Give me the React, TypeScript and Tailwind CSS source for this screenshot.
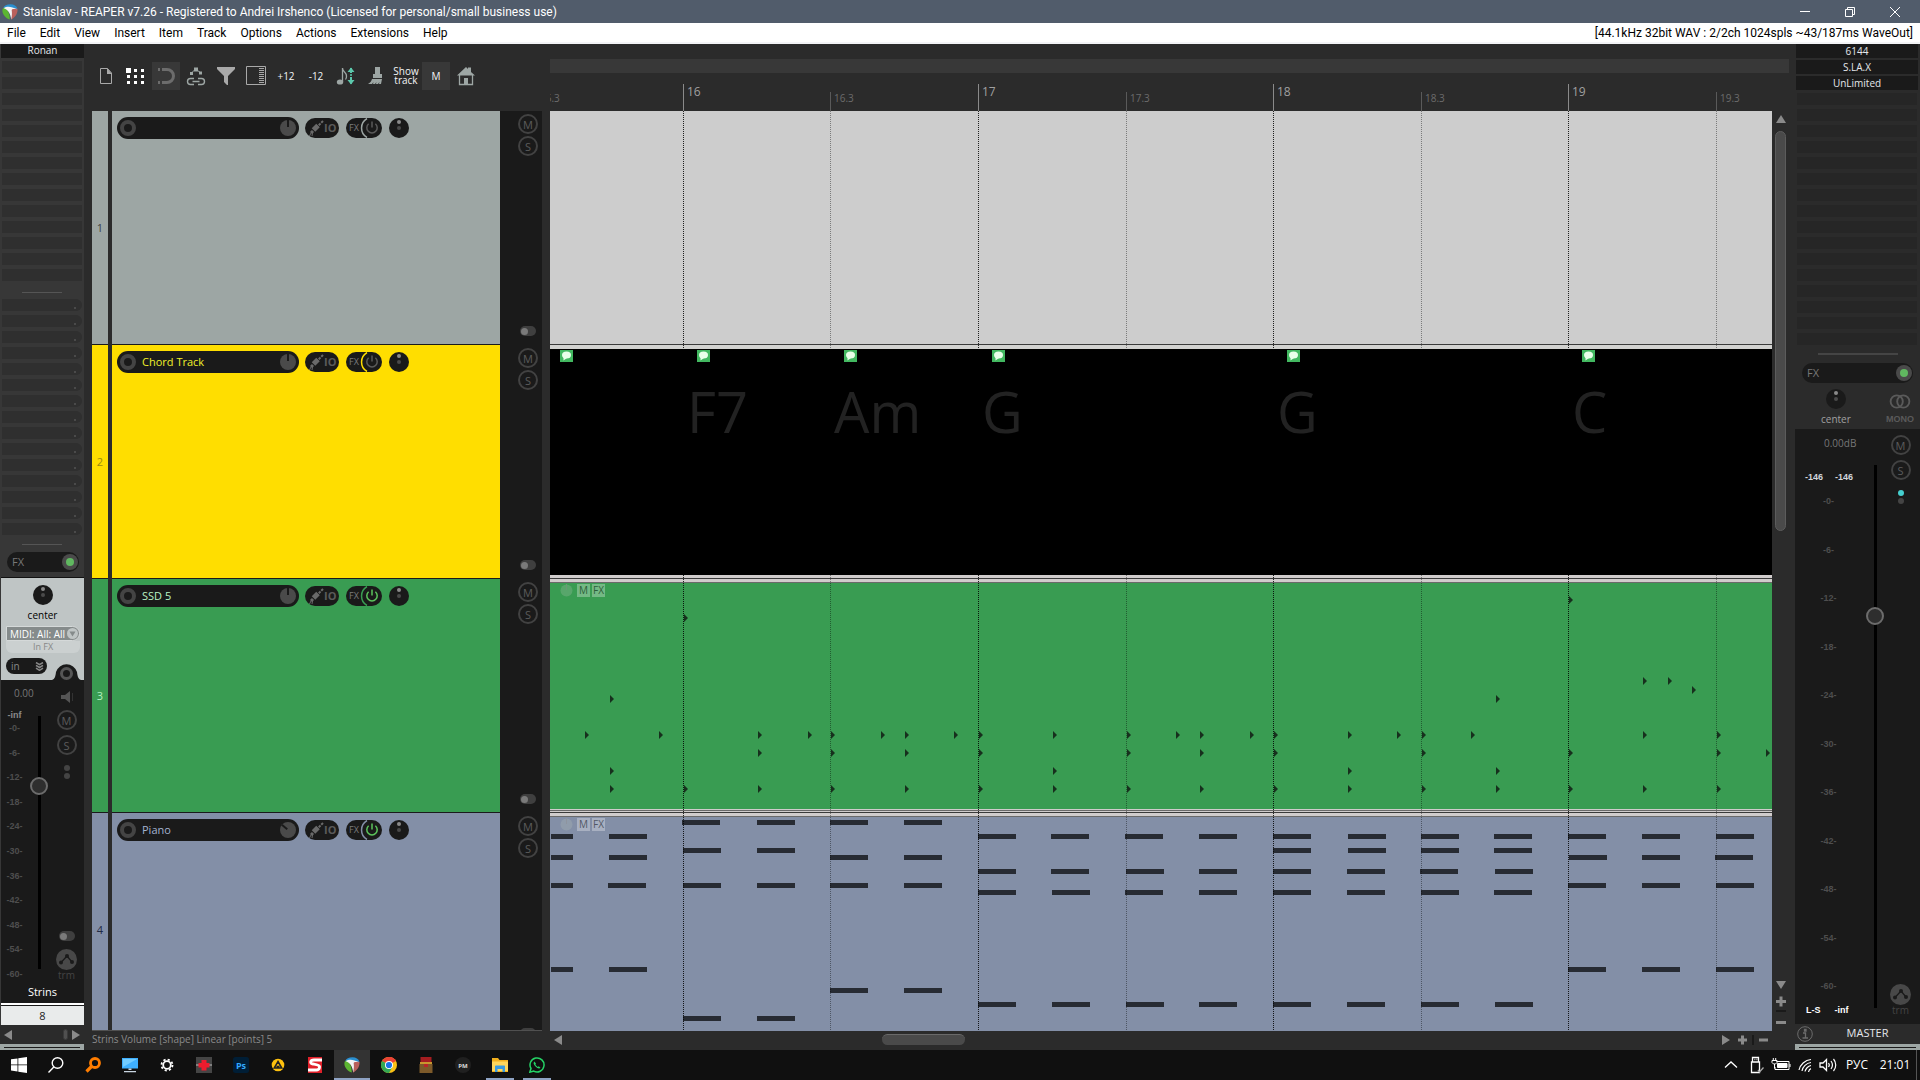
import { useState } from 'react';
import type { ReactNode } from 'react';

interface Track {
  id: number;
  name: string;
  body: string;
  number: string;
  text: string;
  ring: string;
  powered: boolean;
  knob: number;
}

const TRACKS: Track[] = [
  { id: 1, name: '', body: 'bg-[#9da6a4]', number: 'text-[#3a3f45]', text: 'text-gray-300', ring: '#9da6a4', powered: false, knob: 0 },
  { id: 2, name: 'Chord Track', body: 'bg-[#ffde00]', number: 'text-[#9c8a10]', text: 'text-[#f0f02a]', ring: '#ffde00', powered: false, knob: 0 },
  { id: 3, name: 'SSD 5', body: 'bg-[#399c52]', number: 'text-[#b5f0c0]', text: 'text-[#b9f2c4]', ring: '#399c52', powered: true, knob: 0 },
  { id: 4, name: 'Piano', body: 'bg-[#838fa7]', number: 'text-[#1f2a44]', text: 'text-[#a3b3d0]', ring: '#838fa7', powered: true, knob: -50 },
];

const MENU = ['File', 'Edit', 'View', 'Insert', 'Item', 'Track', 'Options', 'Actions', 'Extensions', 'Help'];
const SCALE = ['-0-', '-6-', '-12-', '-18-', '-24-', '-30-', '-36-', '-42-', '-48-', '-54-', '-60-'];

// x positions are pixels from the left edge of the arrange view
const BARS = [
  { x: -14, label: '15.3', major: false },
  { x: 133, label: '16', major: true },
  { x: 280, label: '16.3', major: false },
  { x: 428, label: '17', major: true },
  { x: 576, label: '17.3', major: false },
  { x: 723, label: '18', major: true },
  { x: 871, label: '18.3', major: false },
  { x: 1018, label: '19', major: true },
  { x: 1166, label: '19.3', major: false },
];

const CHORDS = [
  { x: 10, name: '' },
  { x: 147, name: 'F7' },
  { x: 294, name: 'Am' },
  { x: 442, name: 'G' },
  { x: 737, name: 'G' },
  { x: 1032, name: 'C' },
];

// [y, ...x]
const DRUMS: number[][] = [
  [17, 1019],
  [35, 134],
  [98, 1093, 1118],
  [107, 1142],
  [116, 60, 946],
  [152, 35, 109, 208, 258, 281, 331, 355, 404, 429, 503, 577, 626, 650, 700, 724, 798, 847, 872, 921, 1093, 1167],
  [170, 208, 281, 355, 429, 577, 650, 724, 872, 1019, 1167, 1216],
  [188, 60, 503, 798, 946],
  [206, 60, 134, 208, 281, 355, 429, 503, 577, 650, 724, 798, 872, 946, 1019, 1093, 1167],
];

const PIANO: number[][] = [
  [3, 132, 207, 280, 354],
  [17, 1, 59, 428, 501, 575, 649, 723, 798, 871, 944, 1018, 1092, 1166],
  [31, 133, 207, 723, 798, 871, 944],
  [38, 1, 59, 280, 354, 1019, 1092, 1165],
  [52, 428, 501, 576, 649, 723, 797, 870, 945],
  [66, 1, 58, 133, 207, 280, 354, 1018, 1092, 1166],
  [73, 428, 502, 575, 649, 723, 797, 871, 944],
  [150, 1, 59, 1018, 1092, 1166],
  [171, 280, 354],
  [185, 428, 502, 576, 649, 723, 797, 871, 945],
  [199, 133, 207],
];

function ReaperLogo({ className }: { className: string }) {
  return (
    <svg className={className} viewBox="0 0 16 16">
      <path d="M1 4.500C2 1.500 5 .3 8.500.3c3.500 0 6 1.500 7 4.500L11 6 7 3.200z" fill="#2a8fd0" />
      <path d="M.8 4.500 3 3.500c3.500 2.700 4.700 7 4.800 12C3 14-.9 9 .8 4.500z" fill="#5cb531" />
      <path d="M8.500 4.500c3 .2 5 0 7 .3.500 4.200-2 8.700-6.500 10.800C9.800 11 9.800 7.500 8.500 4.500z" fill="#b9605c" />
      <path d="M1.800 4.200C5 2 9.500 2.500 15 5.300c-3-.7-5.500-.3-5.300 1 .3 2 .5 5-.5 9.200C8.700 10.500 6.800 6 1.800 4.200z" fill="#f4f4f4" />
    </svg>
  );
}

function RoundButton({ label }: { label: string }) {
  return (
    <button className="flex size-5 shrink-0 items-center justify-center rounded-full border-2 border-[#424242] text-[11px] leading-none text-[#5c5c5c]">
      {label}
    </button>
  );
}

function Toggle() {
  return (
    <button aria-label="Lock" className="flex h-[10px] w-4 shrink-0 items-center rounded-full bg-[#3f3f3f] px-px">
      <span className="size-[7px] rounded-full bg-[#7a7a7a]" />
    </button>
  );
}

function PanKnob() {
  return (
    <button aria-label="Pan" className="flex size-5 shrink-0 flex-col items-center gap-[2px] rounded-full bg-[#1a1a1a] pt-[2px]">
      <span className="size-1 rounded-full bg-[#8a8a8a]" />
      <span className="size-1 rounded-full bg-[#4a4a4a]" />
    </button>
  );
}

function EnvelopeButton() {
  return (
    <button aria-label="Envelope" className="flex flex-col items-center text-[10px] leading-[11px] text-[#444]">
      <svg className="size-[21px]" viewBox="0 0 21 21">
        <circle cx="10.500" cy="10.500" r="10.500" fill="#484848" />
        <path d="M5 13.500 11 7l5 6" fill="none" stroke="#1a1a1a" strokeWidth="1.300" />
        <circle cx="5" cy="13.500" r="2" fill="#1a1a1a" />
        <circle cx="11" cy="7" r="2" fill="#1a1a1a" />
        <circle cx="16" cy="13" r="2" fill="#1a1a1a" />
      </svg>
      trm
    </button>
  );
}

function Fader({ label, value }: { label: string; value: number }) {
  const [level, setLevel] = useState(value);
  return (
    <input
      type="range"
      aria-label={label}
      min={0}
      max={1000}
      value={level}
      onChange={(e) => setLevel(Number(e.target.value))}
      className="min-h-0 w-[18px] flex-1 appearance-none bg-[linear-gradient(#000,#000)] bg-[length:3px_100%] bg-center bg-no-repeat [direction:rtl] [writing-mode:vertical-lr] [&::-webkit-slider-thumb]:size-[18px] [&::-webkit-slider-thumb]:appearance-none [&::-webkit-slider-thumb]:rounded-full [&::-webkit-slider-thumb]:border-2 [&::-webkit-slider-thumb]:border-[#6c6c6c] [&::-webkit-slider-thumb]:bg-[#2e2e2e]"
    />
  );
}

function FxPill() {
  return (
    <button className="flex h-5 items-center justify-between rounded-full bg-[#1a1a1a] pr-px pl-[5px] text-[11px] text-[#777]">
      FX
      <span className="flex size-4 items-center justify-center rounded-full bg-[#4a4a4a]">
        <span className="size-2 rounded-full bg-[#60b860]" />
      </span>
    </button>
  );
}

function DockHandle() {
  return (
    <div className="flex h-[6px] shrink-0 items-center bg-[#9da6a4] px-1">
      <div className="h-px flex-1 bg-[#1a1a1a]" />
    </div>
  );
}

function ScaleColumn() {
  return (
    <ul className="flex flex-1 flex-col justify-between text-center font-['Liberation_Sans'] text-[9px] leading-3 font-bold text-[#4e4e4e]">
      {SCALE.map((s) => (
        <li key={s}>{s}</li>
      ))}
    </ul>
  );
}

function MixerStrip() {
  return (
    <aside className="flex w-[84px] shrink-0 flex-col bg-[#373737] text-[10px]">
      <div className="ml-px h-[14px] bg-[#1a1a1a] text-center leading-[13px] text-gray-200">Ronan</div>
      <div className="mt-[3px] flex flex-col gap-1 px-[2px]">
        {Array.from({ length: 14 }, (_, i) => (
          <div key={i} className="h-3 bg-[#2f2f2f]" />
        ))}
      </div>
      <div className="mx-auto mt-[11px] mb-[6px] h-px w-10 bg-[#555]" />
      <div className="flex flex-col gap-1 px-[2px]">
        {Array.from({ length: 15 }, (_, i) => (
          <div key={i} className="flex h-3 items-end justify-end rounded-r-md bg-[#2f2f2f] pr-[6px] pb-[2px]">
            <span className="size-[2px] bg-[#4a4a4a]" />
          </div>
        ))}
      </div>
      <div className="mx-auto mt-[9px] mb-[7px] h-px w-10 bg-[#555]" />
      <div className="mr-[5px] mb-[5px] ml-[7px] flex flex-col">
        <FxPill />
      </div>

      <div className="relative ml-px flex h-[103px] shrink-0 flex-col border-t border-[#111] bg-[#bfc5c5] pt-[7px]">
        <div className="flex flex-col items-center">
          <PanKnob />
          <span className="leading-5 text-black">center</span>
        </div>
        <div className="relative mt-px mr-1 ml-[5px] flex h-[15px] items-center rounded-r-full border border-[#d5d9d9] bg-[#858b8b]">
          <select aria-label="Record input" className="h-full w-full appearance-none pl-[3px] text-[10px] leading-none text-white">
            <option>MIDI: All: All</option>
          </select>
          <svg className="pointer-events-none absolute right-0 size-[13px]" viewBox="0 0 13 13">
            <circle cx="6.500" cy="6.500" r="5.500" fill="#bfc5c5" />
            <path d="M3.500 4.500h6l-3 5z" fill="#858b8b" />
          </svg>
        </div>
        <button className="mr-1 ml-[5px] h-3 rounded-b-md bg-[#cbd0d0] text-[9px] leading-3 text-[#888]">In FX</button>
        <button className="mt-[5px] ml-[5px] flex h-4 w-[41px] items-center justify-between rounded-full bg-[#1a1a1a] pr-[3px] pl-[5px] text-[10px] text-[#888]">
          in
          <svg className="size-[9px]" viewBox="0 0 9 9" fill="none" stroke="#888" strokeWidth="1.500">
            <path d="M1 .5l3.500 2.200L8 .5M1 3.300l3.500 2.200L8 3.300M1 6.100l3.500 2.200L8 6.100" />
          </svg>
        </button>
        <svg className="absolute right-0 -bottom-2 h-[26px] w-[33px]" viewBox="0 0 33 26">
          <path d="M1 18C4 17 4.500 14 5 10a11 11 0 0 1 21 0c.5 4 1 7 4 8v1H1z" fill="#1a1a1a" />
          <circle cx="15.500" cy="11.500" r="5" fill="none" stroke="#565656" strokeWidth="3" />
        </svg>
      </div>

      <div className="ml-px flex min-h-0 flex-1 flex-col bg-[#1a1a1a]">
        <div className="flex min-h-0 flex-1">
          <div className="flex w-12 flex-col">
            <span className="h-7 pl-[13px] text-[10px] leading-[26px] text-[#777]">0.00</span>
            <div className="flex min-h-0 flex-1">
              <div className="flex w-[27px] flex-col pb-px">
                <span className="text-center font-['Liberation_Sans'] text-[9px] leading-[14px] font-bold text-[#8a8a8a]">-inf</span>
                <ScaleColumn />
              </div>
              <div className="ml-[2px] flex flex-col pt-2 pb-3">
                <Fader label="Strins volume" value={742} />
              </div>
            </div>
          </div>
          <div className="flex flex-1 flex-col items-center pt-[11px]">
            <svg className="h-3 w-[14px]" viewBox="0 0 14 12">
              <path d="M1 4h4l5-4v12L5 8H1z" fill="#555" />
              <path d="M12.500 2v8" stroke="#333" />
            </svg>
            <div className="mt-[7px] flex flex-col gap-[5px]">
              <RoundButton label="M" />
              <RoundButton label="S" />
            </div>
            <div className="mt-[10px] flex flex-col gap-[2px]">
              <span className="size-[6px] rounded-full bg-[#444]" />
              <span className="size-[6px] rounded-full bg-[#444]" />
            </div>
            <div className="mt-auto flex flex-col items-center gap-2">
              <Toggle />
              <EnvelopeButton />
            </div>
          </div>
        </div>
        <div className="h-[22px] text-center text-[11px] leading-[22px] text-white">Strins</div>
        <div className="h-[2px] bg-white" />
        <div className="mt-px h-[19px] bg-[#e9ebeb] text-center text-[11px] leading-[20px] text-[#222]">8</div>
      </div>
      <div className="flex h-[19px] shrink-0 items-center bg-[#2b2b2b] px-1">
        <svg className="h-[10px] w-2" viewBox="0 0 8 10"><path d="M8 0v10L0 5z" fill="#8a8a8a" /></svg>
        <span className="ml-auto h-[11px] w-[5px] rounded-sm border border-[#3a3a3a] bg-[#505050]" />
        <svg className="ml-1 h-[10px] w-2" viewBox="0 0 8 10"><path d="M0 0v10l8-5z" fill="#8a8a8a" /></svg>
      </div>
      <DockHandle />
    </aside>
  );
}

function ToolButton({ label, active, children }: { label: string; active?: boolean; children: ReactNode }) {
  return (
    <button
      aria-label={label}
      className={`flex size-7 items-center justify-center text-[10px] leading-[9px] text-gray-100 ${active ? 'bg-[#383838]' : ''}`}
    >
      {children}
    </button>
  );
}

function Toolbar() {
  return (
    <div className="flex h-[67px] shrink-0 gap-[2px] pt-[18px]">
      <ToolButton label="New project">
        <svg className="size-5" viewBox="0 0 20 20">
          <path d="M4.500 2.500h7l4 4.500v10.500h-11z" fill="none" stroke="#a9a9a9" />
          <path d="M11 2v6h5z" fill="#a9a9a9" />
        </svg>
      </ToolButton>
      <ToolButton label="Grid">
        <svg className="size-5" viewBox="0 0 20 20" fill="#fff">
          <path d="M0 2h5v5H0zM8 3h3v3H8zM15 3h3v3h-3zM1 9h3v3H1zM8 9h3v3H8zM15 9h3v3h-3zM1 15h3v3H1zM8 15h3v3H8zM15 15h3v3h-3z" />
        </svg>
      </ToolButton>
      <ToolButton label="Snap" active>
        <svg className="size-5" viewBox="0 0 20 20" fill="none" stroke="#6c6c6c">
          <path d="M6 3.500h5a6.500 6.500 0 0 1 0 13H6" strokeWidth="3" />
          <path d="M2 3.500h2M2 16.500h2" strokeWidth="3" />
        </svg>
      </ToolButton>
      <ToolButton label="Envelope link">
        <svg className="size-5" viewBox="0 0 20 20">
          <path d="M5 7.500l4.500-4.500L15 7" fill="none" stroke="#9da6a4" />
          <path d="M4 6h3v3H4zM8 1.500h4v4H8zM13 5.500h3v3h-3z" fill="#9da6a4" />
          <path d="M8 18.500H4.500a3 3 0 0 1 0-6H8M12 12.500h3.500a3 3 0 0 1 0 6H12M6.500 15.500h7" fill="none" stroke="#9da6a4" strokeWidth="1.400" />
        </svg>
      </ToolButton>
      <ToolButton label="Filter">
        <svg className="size-5" viewBox="0 0 20 20">
          <path d="M1 1h18v2l-7 7v9H11l-3-3v-6L1 3z" fill="#a9a9a9" />
        </svg>
      </ToolButton>
      <ToolButton label="Panel">
        <svg className="size-5" viewBox="0 0 20 20" stroke="#a9a9a9" fill="none">
          <path d="M.5.500h19v18H.5z" />
          <path d="M13 2.500h5M13 4.500h5M13 6.500h5M13 8.500h5M13 10.500h5M13 12.500h5M13 14.500h5M13 16.500h5" />
        </svg>
      </ToolButton>
      <ToolButton label="Up an octave">+12</ToolButton>
      <ToolButton label="Down an octave">-12</ToolButton>
      <ToolButton label="Transpose">
        <svg className="size-5" viewBox="0 0 20 20">
          <ellipse cx="4" cy="16" rx="3.200" ry="2.600" fill="#9da6a4" />
          <path d="M6.500 16V2c0 4 4 4 4 8 0 1.500-.5 3-1 3.500" fill="none" stroke="#9da6a4" strokeWidth="1.300" />
          <path d="M15 2v16" stroke="#5cc8ac" strokeWidth="2" strokeDasharray="5 1.200 1.600 1.200" />
          <path d="M11.500 6 15 1.500 18.500 6zM11.500 14l3.500 4.500 3.500-4.500z" fill="#5cc8ac" />
        </svg>
      </ToolButton>
      <ToolButton label="Clean">
        <svg className="size-5" viewBox="0 0 20 20" fill="#9da6a4">
          <path d="M9 1h5v7h2v4H7V8h2z" />
          <path d="M7 13h9l-1 5h-2l.5-2-1.500 2h-2l.5-2-1.500 2H7l.5-2L6 18H2c2-1 3.500-3 4-5z" />
        </svg>
      </ToolButton>
      <ToolButton label="Show track">Show track</ToolButton>
      <ToolButton label="Mute" active>M</ToolButton>
      <ToolButton label="Home">
        <svg className="size-5" viewBox="0 0 20 20">
          <path d="M1 9.500 10 1l2 2V1.500h3V6l4 3.500z" fill="#9da6a4" />
          <path d="M3.500 9v9.500h13V9" fill="none" stroke="#9da6a4" strokeWidth="1.300" />
          <path d="M8 12h4v6H8z" fill="#9da6a4" />
        </svg>
      </ToolButton>
    </div>
  );
}

function TrackHeader({ track }: { track: Track }) {
  return (
    <section className="flex h-[234px] shrink-0">
      <div className={`flex w-4 items-center justify-center border-b border-[#1a1a1a] pt-px text-[11px] ${track.body} ${track.number}`}>
        {track.id}
      </div>
      <div className={`ml-1 flex min-w-0 flex-1 items-start border-b border-[#1a1a1a] pt-[6px] pl-[5px] ${track.body}`}>
        <div className="flex h-[22px] w-[182px] items-center rounded-full bg-[#1a1a1a] px-[3px]">
          <button aria-label="Record arm" className="size-4 shrink-0 rounded-full border-4 border-[#444] bg-[#1a1a1a]" />
          <input
            aria-label={`Track ${track.id} name`}
            defaultValue={track.name}
            className={`ml-[6px] w-0 min-w-0 flex-1 text-[11px] outline-none ${track.text}`}
          />
          <svg className="size-4 shrink-0" viewBox="0 0 16 16">
            <circle cx="8" cy="8" r="8" fill="#4a4a4a" />
            <path d="M8 0v7" stroke="#1a1a1a" strokeWidth="2" transform={`rotate(${track.knob} 8 8)`} />
          </svg>
        </div>
        <button className="mt-px ml-[6px] flex h-5 w-[34px] items-center rounded-full bg-[#1a1a1a] pl-[3px] text-[11px] font-bold text-[#5a5a5a]">
          <svg className="h-4 w-4" viewBox="0 0 16 16" stroke="#6a6a6a">
            <path d="M15 1 9 7" strokeWidth="2" strokeDasharray="2.500 1" />
            <path d="M10 5.500 5.500 10" strokeWidth="5" />
            <path d="M5 11l-2 2" strokeWidth="3" />
            <path d="M1.500 16l1.500-3M4 16l.5-3" strokeWidth="1" />
          </svg>
          IO
        </button>
        <div className="mt-px ml-[7px] flex h-5 w-9 items-center rounded-full bg-[#1a1a1a] pl-[2px]">
          <button className="w-3 text-[9px] text-[#7a7a7a]">FX</button>
          <button aria-label="FX power">
            <svg className="h-5 w-[22px]" viewBox="0 0 22 20" fill="none">
              <path d="M7 .5a11 11 0 0 0 0 19" stroke={track.ring} strokeWidth="1.500" />
              <g stroke={track.powered ? '#5cc45c' : '#5a5a5a'} strokeWidth="1.500">
                <path d="M8.600 5.800a5.200 5.200 0 1 0 6.800 0M12 3.500v6" />
              </g>
            </svg>
          </button>
        </div>
        <div className="mt-px ml-[7px]">
          <PanKnob />
        </div>
      </div>
      <div className="flex w-[42px] flex-col items-center gap-[2px] bg-[#1a1a1a] pt-[3px] pb-[9px] pl-[14px]">
        <RoundButton label="M" />
        <RoundButton label="S" />
        <div className="mt-auto">
          <Toggle />
        </div>
      </div>
    </section>
  );
}

function TrackPanel() {
  return (
    <div className="ml-2 flex w-[450px] shrink-0 flex-col">
      <Toolbar />
      <div className="min-h-0 flex-1 overflow-hidden">
        {TRACKS.map((t) => (
          <TrackHeader key={t.id} track={t} />
        ))}
      </div>
      <div className="h-5 shrink-0 border-t border-[#505050] text-[10px] leading-[17px] text-[#8a8a8a]">
        Strins Volume [shape] Linear [points] 5
      </div>
    </div>
  );
}

function ItemBadges() {
  return (
    <div className="flex gap-[2px] pt-px pl-[10px] text-[10px] leading-3 opacity-50">
      <svg className="size-[13px]" viewBox="0 0 13 13">
        <circle cx="6.500" cy="6.500" r="6" fill="#b8c4b8" fillOpacity=".5" />
        <path d="M6.500 0v6" stroke="#999" />
      </svg>
      <span className="ml-[2px] h-[13px] w-[13px] bg-white/60 text-center text-[#222]">M</span>
      <span className="h-[13px] w-[13px] bg-white/60 text-center text-[#222]">FX</span>
    </div>
  );
}

function Arrange() {
  return (
    <div className="relative min-h-0 flex-1 overflow-hidden">
      <div className="h-[233px] bg-[#cdcdcd]" />
      <div className="h-px bg-[#3a3a3a]" />
      <div className="h-1 bg-[#d2d2d0]" />
      <div className="relative h-[226px] bg-black">
        {CHORDS.map((c) => (
          <div key={c.x} className="absolute top-px" style={{ left: c.x }}>
            <svg className="h-3 w-[13px]" viewBox="0 0 13 12">
              <path d="M0 0h13v12H0z" fill="#42b860" />
              <ellipse cx="6.500" cy="5" rx="4.500" ry="3.500" fill="#e8ffe8" />
              <path d="M3.500 6.500v4L7 8z" fill="#e8ffe8" />
            </svg>
            <span className="absolute top-[23px] -left-[10px] text-[56px] leading-[76px] text-[#222]">{c.name}</span>
          </div>
        ))}
      </div>
      <div className="h-1 border-b border-[#3a3a3a] bg-[#d0cccc]" />
      <div className="h-1 border-b border-[#6a6a6a] bg-[#d0cccc]" />
      <div className="relative h-[226px] bg-[#399c52]">
        <svg className="absolute inset-0 h-full w-full" fill="#17301d">
          {DRUMS.map(([y, ...xs]) =>
            xs.map((x) => <path key={`${x}-${y}`} d={`M${x} ${y - 4}l4 4-4 4z`} />),
          )}
        </svg>
        <ItemBadges />
      </div>
      <div className="h-[2px] border-b border-[#6a6a6a] bg-[#d0cccc]" />
      <div className="h-[2px] border-b border-[#3a3a3a] bg-[#d0cccc]" />
      <div className="h-1 border-b border-[#6a6a6a] bg-[#d0cccc]" />
      <div className="relative h-full bg-[#838fa7]">
        <svg className="absolute inset-0 h-full w-full" fill="#272b33">
          {PIANO.map(([y, ...xs]) =>
            xs.map((x) => <rect key={`${x}-${y}`} x={x} y={y} width={x === 1 ? 22 : 38} height="5" />),
          )}
        </svg>
        <ItemBadges />
      </div>
      <svg className="absolute inset-0 h-full w-full" shapeRendering="crispEdges">
        {BARS.map((b) => (
          <line key={b.label} x1={b.x + 0.5} x2={b.x + 0.5} y1="0" y2="100%" stroke="#000" strokeOpacity={b.major ? 0.85 : 0.4} strokeDasharray="1 1" />
        ))}
      </svg>
    </div>
  );
}

function Ruler() {
  return (
    <div className="relative h-[38px] shrink-0 overflow-hidden">
      {BARS.map((b) => (
        <span
          key={b.label}
          style={{ left: b.x }}
          className={
            b.major
              ? 'absolute bottom-0 h-[27px] border-l border-[#8a8a8a] pl-[3px] text-xs leading-4 text-[#a0a0a0]'
              : 'absolute bottom-0 h-[19px] border-l border-[#5a5a5a] pl-[3px] text-[10px] leading-[13px] text-[#6c6c6c]'
          }
        >
          {b.label}
        </span>
      ))}
    </div>
  );
}

function Timeline() {
  return (
    <div className="ml-2 flex min-w-0 flex-1 flex-col">
      <div className="mt-[15px] mr-[6px] h-[14px] shrink-0 bg-[#383838]" />
      <div className="flex min-h-0 flex-1">
        <div className="flex min-w-0 flex-1 flex-col">
          <Ruler />
          <Arrange />
          <div className="flex h-[19px] shrink-0 items-center pr-1 pb-[2px] pl-1">
            <svg className="h-[10px] w-2" viewBox="0 0 8 10"><path d="M8 0v10L0 5z" fill="#8a8a8a" /></svg>
            <div className="flex flex-1">
              <div className="ml-[27.6%] h-[11px] w-[83px] rounded-full border-t border-[#6a6a6a] bg-[#4a4a4a]" />
            </div>
            <svg className="h-[10px] w-[46px]" viewBox="0 0 46 10" fill="#8a8a8a">
              <path d="M0 0v10l8-5zM16 3.500h3v-3h3v3h3v3h-3v3h-3v-3h-3zM37 3.500h9v3h-9z" />
              <path d="M30 0h2v10h-2z" fill="#1a1a1a" />
            </svg>
          </div>
        </div>
        <div className="flex w-[23px] flex-col items-center pt-[42px] pr-[6px] pb-[23px]">
          <svg className="h-2 w-[10px]" viewBox="0 0 10 8"><path d="M5 0l5 8H0z" fill="#8a8a8a" /></svg>
          <div className="mt-2 flex w-full flex-1 flex-col items-center">
            <div className="h-[47%] w-[11px] rounded-full border border-[#5c5c5c] bg-[#4a4a4a]" />
          </div>
          <svg className="h-[46px] w-[10px]" viewBox="0 0 10 46" fill="#8a8a8a">
            <path d="M0 0h10L5 8zM0 19h3.500v-3.500h3V19H10v3H6.500v3.500h-3V22H0zM0 40h10v3H0z" />
            <path d="M0 29h10v2H0z" fill="#1a1a1a" />
          </svg>
        </div>
      </div>
    </div>
  );
}

function MasterStrip() {
  return (
    <aside className="flex w-[125px] shrink-0 flex-col text-[10px]">
      <div className="mr-[2px] ml-px flex flex-col gap-[2px] text-center leading-[13px] text-gray-200">
        {['6144', 'S.LA.X', 'UnLimited'].map((fx) => (
          <button key={fx} className="h-[14px] bg-[#1a1a1a]">{fx}</button>
        ))}
      </div>
      <div className="mt-[3px] mr-[3px] ml-[2px] flex flex-col gap-1">
        {Array.from({ length: 16 }, (_, i) => (
          <div key={i} className="h-3 bg-[#262626]" />
        ))}
      </div>
      <div className="mx-auto mt-2 mb-2 h-[2px] w-20 bg-[#454545]" />
      <div className="mr-[7px] ml-[7px] flex flex-col">
        <FxPill />
      </div>
      <div className="mt-[6px] flex h-10 justify-between pr-[6px] pl-[26px] text-[10px]">
        <div className="flex flex-col items-center leading-5 text-[#a0a0a0]">
          <PanKnob />
          center
        </div>
        <button className="flex flex-col items-center pt-[5px] font-['Liberation_Sans'] text-[9px] leading-5 font-bold text-[#5a5a5a]">
          <svg className="h-4 w-6" viewBox="0 0 24 16" fill="none" stroke="#5a5a5a" strokeWidth="2">
            <circle cx="8.500" cy="8" r="6.500" />
            <circle cx="15.500" cy="8" r="6.500" />
          </svg>
          MONO
        </button>
      </div>
      <div className="flex min-h-0 flex-1 bg-[#1a1a1a]">
        <div className="flex w-[71px] flex-col">
          <span className="pl-[29px] leading-7 whitespace-nowrap text-[#777]">0.00dB</span>
          <div className="mt-3 flex gap-3 pl-[10px] font-['Liberation_Sans'] text-[9px] leading-4 font-bold text-gray-300">
            <span>-146</span>
            <span>-146</span>
          </div>
          <div className="mt-[10px] flex min-h-0 flex-1 flex-col pr-1">
            <ScaleColumn />
          </div>
          <div className="mt-2 mb-1 flex gap-[14px] pl-[11px] font-['Liberation_Sans'] text-[9px] leading-5 font-bold text-white">
            <span>L-S</span>
            <span>-inf</span>
          </div>
        </div>
        <div className="flex flex-col pt-9 pb-4">
          <Fader label="Master volume" value={730} />
        </div>
        <div className="flex flex-1 flex-col items-center pt-[6px] pr-[3px]">
          <div className="flex flex-col gap-[5px]">
            <RoundButton label="M" />
            <RoundButton label="S" />
          </div>
          <div className="mt-[10px] flex flex-col gap-[2px]">
            <span className="size-[6px] rounded-full bg-[#45cfcf]" />
            <span className="size-[6px] rounded-full bg-[#444]" />
          </div>
          <div className="mt-auto pb-2">
            <EnvelopeButton />
          </div>
        </div>
      </div>
      <div className="flex h-5 shrink-0 items-center px-[2px] pb-px text-[11px] text-gray-200">
        <svg className="size-4" viewBox="0 0 16 16" fill="none" stroke="#6c6c6c">
          <circle cx="8" cy="8" r="7.300" />
          <path d="M6 7h2.500v5M5.500 12h5.500M7.500 3.500h1.500v1.500H7.500z" strokeWidth="1.300" />
        </svg>
        <span className="flex-1 pl-1 text-center">MASTER</span>
      </div>
      <DockHandle />
    </aside>
  );
}

const APPS: { label: string; icon: ReactNode; open?: boolean; active?: boolean }[] = [
  { label: 'Start', icon: <path d="M0 2.300 6.500 1.400v6.100H0zM7.300 1.300 16 0v7.500H7.300zM0 8.300h6.500v6.200L0 13.600zM7.300 8.300H16V16l-8.700-1.300z" fill="#fff" /> },
  {
    label: 'Search',
    icon: (
      <g fill="none" stroke="#fff" strokeWidth="1.400">
        <circle cx="9.500" cy="6" r="5.300" />
        <path d="M5.800 10 .5 15.500" />
      </g>
    ),
  },
  {
    label: 'Everything',
    icon: (
      <g fill="none" stroke="#ff7d00">
        <circle cx="10" cy="6" r="4.500" strokeWidth="2.800" />
        <path d="M6.500 9.500 1.500 14.500" strokeWidth="3.200" />
      </g>
    ),
  },
  {
    label: 'This PC',
    icon: (
      <>
        <path d="M0 1h16v10.500H0z" fill="#3fb0ff" />
        <path d="M1 2h14L1 10z" fill="#72ccff" />
        <path d="M6.500 11.500h3V13h-3zM2 14h12v1.200H2z" fill="#c9d6e2" />
      </>
    ),
  },
  {
    label: 'Settings',
    icon: (
      <g fill="none" stroke="#fff">
        <circle cx="8" cy="8" r="3.800" strokeWidth="1.800" />
        <circle cx="8" cy="8" r="5.500" strokeWidth="1.800" strokeDasharray="2.160 2.160" />
      </g>
    ),
  },
  {
    label: 'Audio tool',
    icon: (
      <>
        <path d="M0 0h16v16H0z" fill="#454545" />
        <path d="M0 8h16" stroke="#bbb" />
        <path d="M5.500 3h5v3h3v4.500h-3v3h-5v-3h-3V6h3z" fill="#ee1c2e" />
      </>
    ),
  },
  {
    label: 'Photoshop',
    icon: (
      <>
        <rect width="16" height="16" rx="2.500" fill="#001e36" />
        <text x="8" y="11.500" textAnchor="middle" fontSize="9" fontWeight="700" fill="#31a8ff">Ps</text>
      </>
    ),
  },
  {
    label: 'Player',
    icon: (
      <>
        <circle cx="8" cy="8" r="6.300" fill="#ffc20e" />
        <path d="M8 4.500 11.800 11H4.200zM6.500 9.500h3" fill="none" stroke="#222" strokeWidth="1.500" />
      </>
    ),
  },
  {
    label: 'Score editor',
    icon: (
      <>
        <path d="M1 0h14v16H1z" fill="#e0202a" />
        <path d="M15 3H7C3 3 2.500 6.500 6 7l4.500 1c3.500 1 2 5-1 5H1" fill="none" stroke="#fff" strokeWidth="2.800" />
      </>
    ),
  },
  { label: 'REAPER', icon: null, open: true, active: true },
  {
    label: 'Chrome',
    icon: (
      <>
        <circle cx="8" cy="8" r="8" fill="#fbc116" />
        <path d="M8 8 1.070 4A8 8 0 0 1 14.930 4z" fill="#ea4335" />
        <path d="M8 0a8 8 0 0 1 6.930 4H8z" fill="#ea4335" />
        <path d="M1.070 4A8 8 0 0 0 8 16l3.500-6L8 8z" fill="#34a853" />
        <circle cx="8" cy="8" r="4" fill="#fff" />
        <circle cx="8" cy="8" r="3.100" fill="#1a73e8" />
      </>
    ),
  },
  {
    label: 'Library',
    icon: (
      <>
        <path d="M2.500 0h11v5h-11z" fill="#a51d20" />
        <path d="M2 5h12v2H2z" fill="#c9962e" />
        <path d="M1.500 7h13v9h-13z" fill="#7d5a2a" />
        <path d="M6 7h4v3H6z" fill="#b8262a" />
      </>
    ),
  },
  {
    label: 'Plugin manager',
    icon: (
      <>
        <circle cx="8" cy="8" r="8" fill="#202020" />
        <text x="8" y="10.500" textAnchor="middle" fontSize="6" fontWeight="700" fill="#ddd">PM</text>
      </>
    ),
  },
  {
    label: 'Explorer',
    open: true,
    icon: (
      <>
        <path d="M0 1h6l1.500 2H16v12H0z" fill="#f2b01e" />
        <path d="M0 4.500h16V14H0z" fill="#ffd65c" />
        <path d="M3 15V9.500c0-.8.500-1 1-1h8c.6 0 1 .4 1 1V15h-2.500v-3h-5v3z" fill="#3a9be0" />
      </>
    ),
  },
  {
    label: 'WhatsApp',
    open: true,
    icon: (
      <>
        <path d="M.8 15.200 2 11.500a7 7 0 1 1 2.700 2.600z" fill="none" stroke="#25d366" strokeWidth="1.500" />
        <path d="M5.500 4.500c-1.500 1-1 3 1 5s4 2.500 5 1.200l-1.800-1.400-1 .6C7.500 9.300 7 8.700 6.400 7.600l.6-.9z" fill="#25d366" />
      </>
    ),
  },
];

function Taskbar() {
  return (
    <footer className="flex h-[30px] shrink-0 items-stretch bg-[#101010] text-xs text-white">
      <nav className="flex gap-px pl-px">
        {APPS.map((a) => (
          <button
            key={a.label}
            aria-label={a.label}
            className={`flex w-9 flex-col items-center pt-[7px] ${a.active ? 'bg-[#333]' : ''}`}
          >
            {a.icon ? <svg className="size-4" viewBox="0 0 16 16">{a.icon}</svg> : <ReaperLogo className="size-4" />}
            {a.open && <span className={`mt-auto h-[2px] bg-[#8fa3c4] ${a.active ? 'w-full' : 'w-7'}`} />}
          </button>
        ))}
      </nav>
      <div className="ml-auto flex items-center">
        <svg className="h-[18px] w-[120px]" viewBox="0 0 120 18" fill="none" stroke="#fff" strokeWidth="1.300">
          <path d="M6 11.500 12 6l6 5.500" />
          <path d="M33.500 6V1.500h6V6M32.500 6h8v10.500h-8zM35.500 3.500h.8M37.500 3.500h.8" />
          <path d="M39 14l1.500 2 4-4.500" stroke="#aaa" />
          <path d="M57.500 5.500h12.500v8H56V11" strokeWidth="1" />
          <path d="M58.500 7.500h9.500v4h-9.500z" fill="#fff" strokeWidth="1" />
          <path d="M71 8v3M53 4.500h5v2l-1.500 1.500h-2L53 6.500zM54.300 2v2.500M56.700 2v2.500M55.500 8v4.500" strokeWidth="1" />
          <path d="M80 14C81 9 86 4 92 3.500M83 15c.5-4 4.500-8 9-8.500M86 15.500c.5-2.500 3-5.500 6-6M89.500 16c.3-1.500 1.300-3 2.500-3.300" strokeWidth="1.200" />
          <path d="M101 7h3l3.500-3.500v11L104 11h-3z" />
          <path d="M109.500 7c.8 1 .8 3 0 4M112 5c1.800 2.500 1.800 5.500 0 8M114.500 3c3 3.500 3 8.500 0 12" strokeWidth="1.200" />
        </svg>
        <span className="w-9 text-center">РУС</span>
        <time className="w-10 text-center">21:01</time>
        <span className="mr-[3px] ml-[1px] h-[30px] w-px bg-[#555]" />
      </div>
    </footer>
  );
}

export default function App() {
  return (
    <div className="flex h-screen flex-col overflow-hidden bg-[#2b2b2b] font-['Open_Sans','Noto_Sans',sans-serif]">
      <header className="flex h-[23px] shrink-0 items-center bg-[#515c6b] pl-[2px] font-['Roboto',sans-serif] text-xs text-white">
        <ReaperLogo className="size-4" />
        <h1 className="ml-[5px] whitespace-nowrap">Stanislav - REAPER v7.26 - Registered to Andrei Irshenco (Licensed for personal/small business use)</h1>
        <div className="ml-auto flex">
          <button aria-label="Minimize" className="flex w-[45px] justify-center">
            <svg className="size-3" viewBox="0 0 12 12" stroke="#fff"><path d="M1 5.500h10" /></svg>
          </button>
          <button aria-label="Restore" className="flex w-[45px] justify-center">
            <svg className="size-3" viewBox="0 0 12 12" fill="none" stroke="#fff"><path d="M1.500 3.500h7v7h-7zM3.500 3.500v-2h7v7h-2" /></svg>
          </button>
          <button aria-label="Close" className="mr-[2px] flex w-[46px] justify-center">
            <svg className="size-3" viewBox="0 0 12 12" stroke="#fff"><path d="M1 1l10 10M11 1 1 11" /></svg>
          </button>
        </div>
      </header>
      <nav className="flex h-[21px] shrink-0 items-center gap-[14px] border-b-2 border-gray-100 bg-white px-[7px] font-['Roboto',sans-serif] text-xs text-black">
        {MENU.map((m) => (
          <button key={m}>{m}</button>
        ))}
        <span className="ml-auto">[44.1kHz 32bit WAV : 2/2ch 1024spls ~43/187ms WaveOut]</span>
      </nav>
      <main className="flex min-h-0 flex-1">
        <MixerStrip />
        <TrackPanel />
        <Timeline />
        <MasterStrip />
      </main>
      <Taskbar />
    </div>
  );
}
